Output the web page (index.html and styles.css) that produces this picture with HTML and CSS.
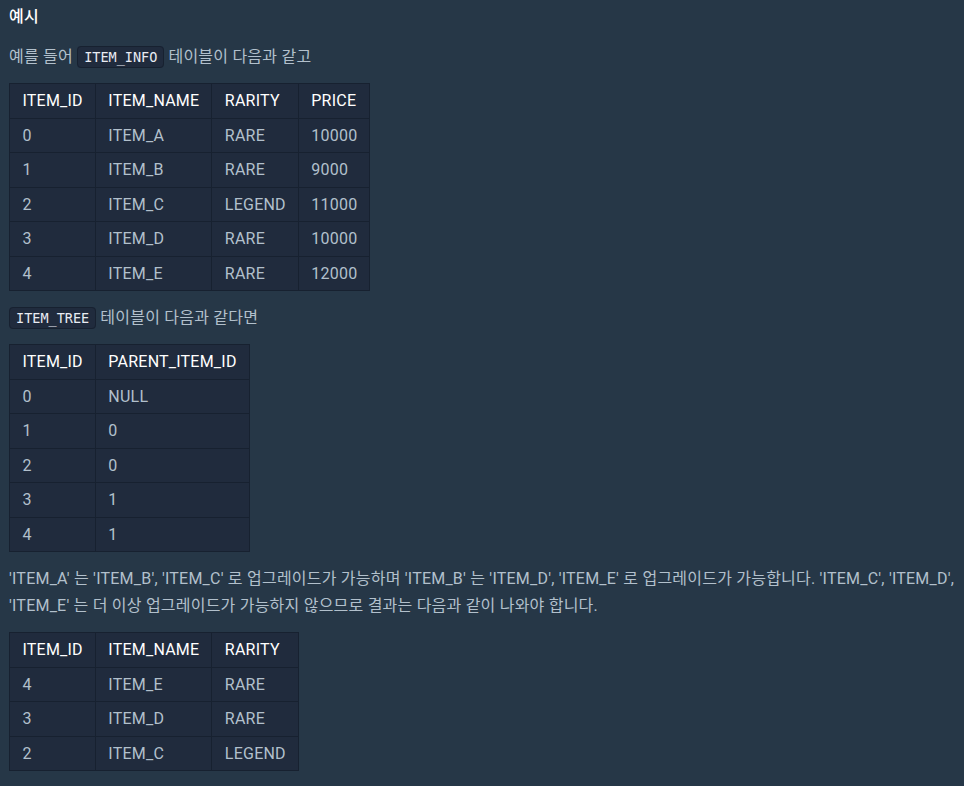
FILE: index.html
```html
<!DOCTYPE html>
<html lang="ko">
<head>
<meta charset="utf-8">
<link rel="stylesheet" href="styles.css">
</head>
<body>
<div class="content">
  <h5 class="title">예시</h5>
  <p>예를 들어 <code>ITEM_INFO</code> 테이블이 다음과 같고</p>
  <table>
    <thead><tr><th>ITEM_ID</th><th>ITEM_NAME</th><th>RARITY</th><th>PRICE</th></tr></thead>
    <tbody>
      <tr><td>0</td><td>ITEM_A</td><td>RARE</td><td>10000</td></tr>
      <tr><td>1</td><td>ITEM_B</td><td>RARE</td><td>9000</td></tr>
      <tr><td>2</td><td>ITEM_C</td><td>LEGEND</td><td>11000</td></tr>
      <tr><td>3</td><td>ITEM_D</td><td>RARE</td><td>10000</td></tr>
      <tr><td>4</td><td>ITEM_E</td><td>RARE</td><td>12000</td></tr>
    </tbody>
  </table>
  <p><code>ITEM_TREE</code> 테이블이 다음과 같다면</p>
  <table>
    <thead><tr><th>ITEM_ID</th><th>PARENT_ITEM_ID</th></tr></thead>
    <tbody>
      <tr><td>0</td><td>NULL</td></tr>
      <tr><td>1</td><td>0</td></tr>
      <tr><td>2</td><td>0</td></tr>
      <tr><td>3</td><td>1</td></tr>
      <tr><td>4</td><td>1</td></tr>
    </tbody>
  </table>
  <p>'ITEM_A' 는 'ITEM_B', 'ITEM_C' 로 업그레이드가 가능하며 'ITEM_B' 는 'ITEM_D', 'ITEM_E' 로 업그레이드가 가능합니다. 'ITEM_C', 'ITEM_D', 'ITEM_E' 는 더 이상 업그레이드가 가능하지 않으므로 결과는 다음과 같이 나와야 합니다.</p>
  <table>
    <thead><tr><th>ITEM_ID</th><th>ITEM_NAME</th><th>RARITY</th></tr></thead>
    <tbody>
      <tr><td>4</td><td>ITEM_E</td><td>RARE</td></tr>
      <tr><td>3</td><td>ITEM_D</td><td>RARE</td></tr>
      <tr><td>2</td><td>ITEM_C</td><td>LEGEND</td></tr>
    </tbody>
  </table>
</div>
</body>
</html>
```
FILE: styles.css
```css
html, body {
  margin: 0;
  padding: 0;
  background: #263747;
}
body {
  font-family: Roboto, "Noto Sans CJK KR", sans-serif;
  font-size: 16px;
  letter-spacing: 0.22px;
  color: #b2c0cc;
}
.content {
  display: flex;
  flex-direction: column;
  align-items: flex-start;
  gap: 13px;
  padding: 3px 0 0 9px;
}
.title {
  margin: 0;
  font-size: 16px;
  font-weight: 500;
  line-height: 27px;
  color: #ffffff;
}
p {
  margin: 0;
  line-height: 27px;
}
code {
  font-family: "DejaVu Sans Mono", monospace;
  font-size: 13.5px;
  line-height: 16px;
  letter-spacing: 0;
  color: #e9ecf3;
  background: #202b3d;
  border: 1px solid #172130;
  border-radius: 4px;
  padding: 2px 6px;
}
table {
  border-collapse: collapse;
  background: #202b3d;
  border: 1px solid #172130;
}
th, td {
  border: 1px solid #172130;
  padding: 5px 12px 5px 12.5px;
  line-height: 23.5px;
  text-align: left;
  white-space: nowrap;
}
th {
  color: #ffffff;
  font-weight: 400;
}
td {
  color: #b2c0cc;
}
```
